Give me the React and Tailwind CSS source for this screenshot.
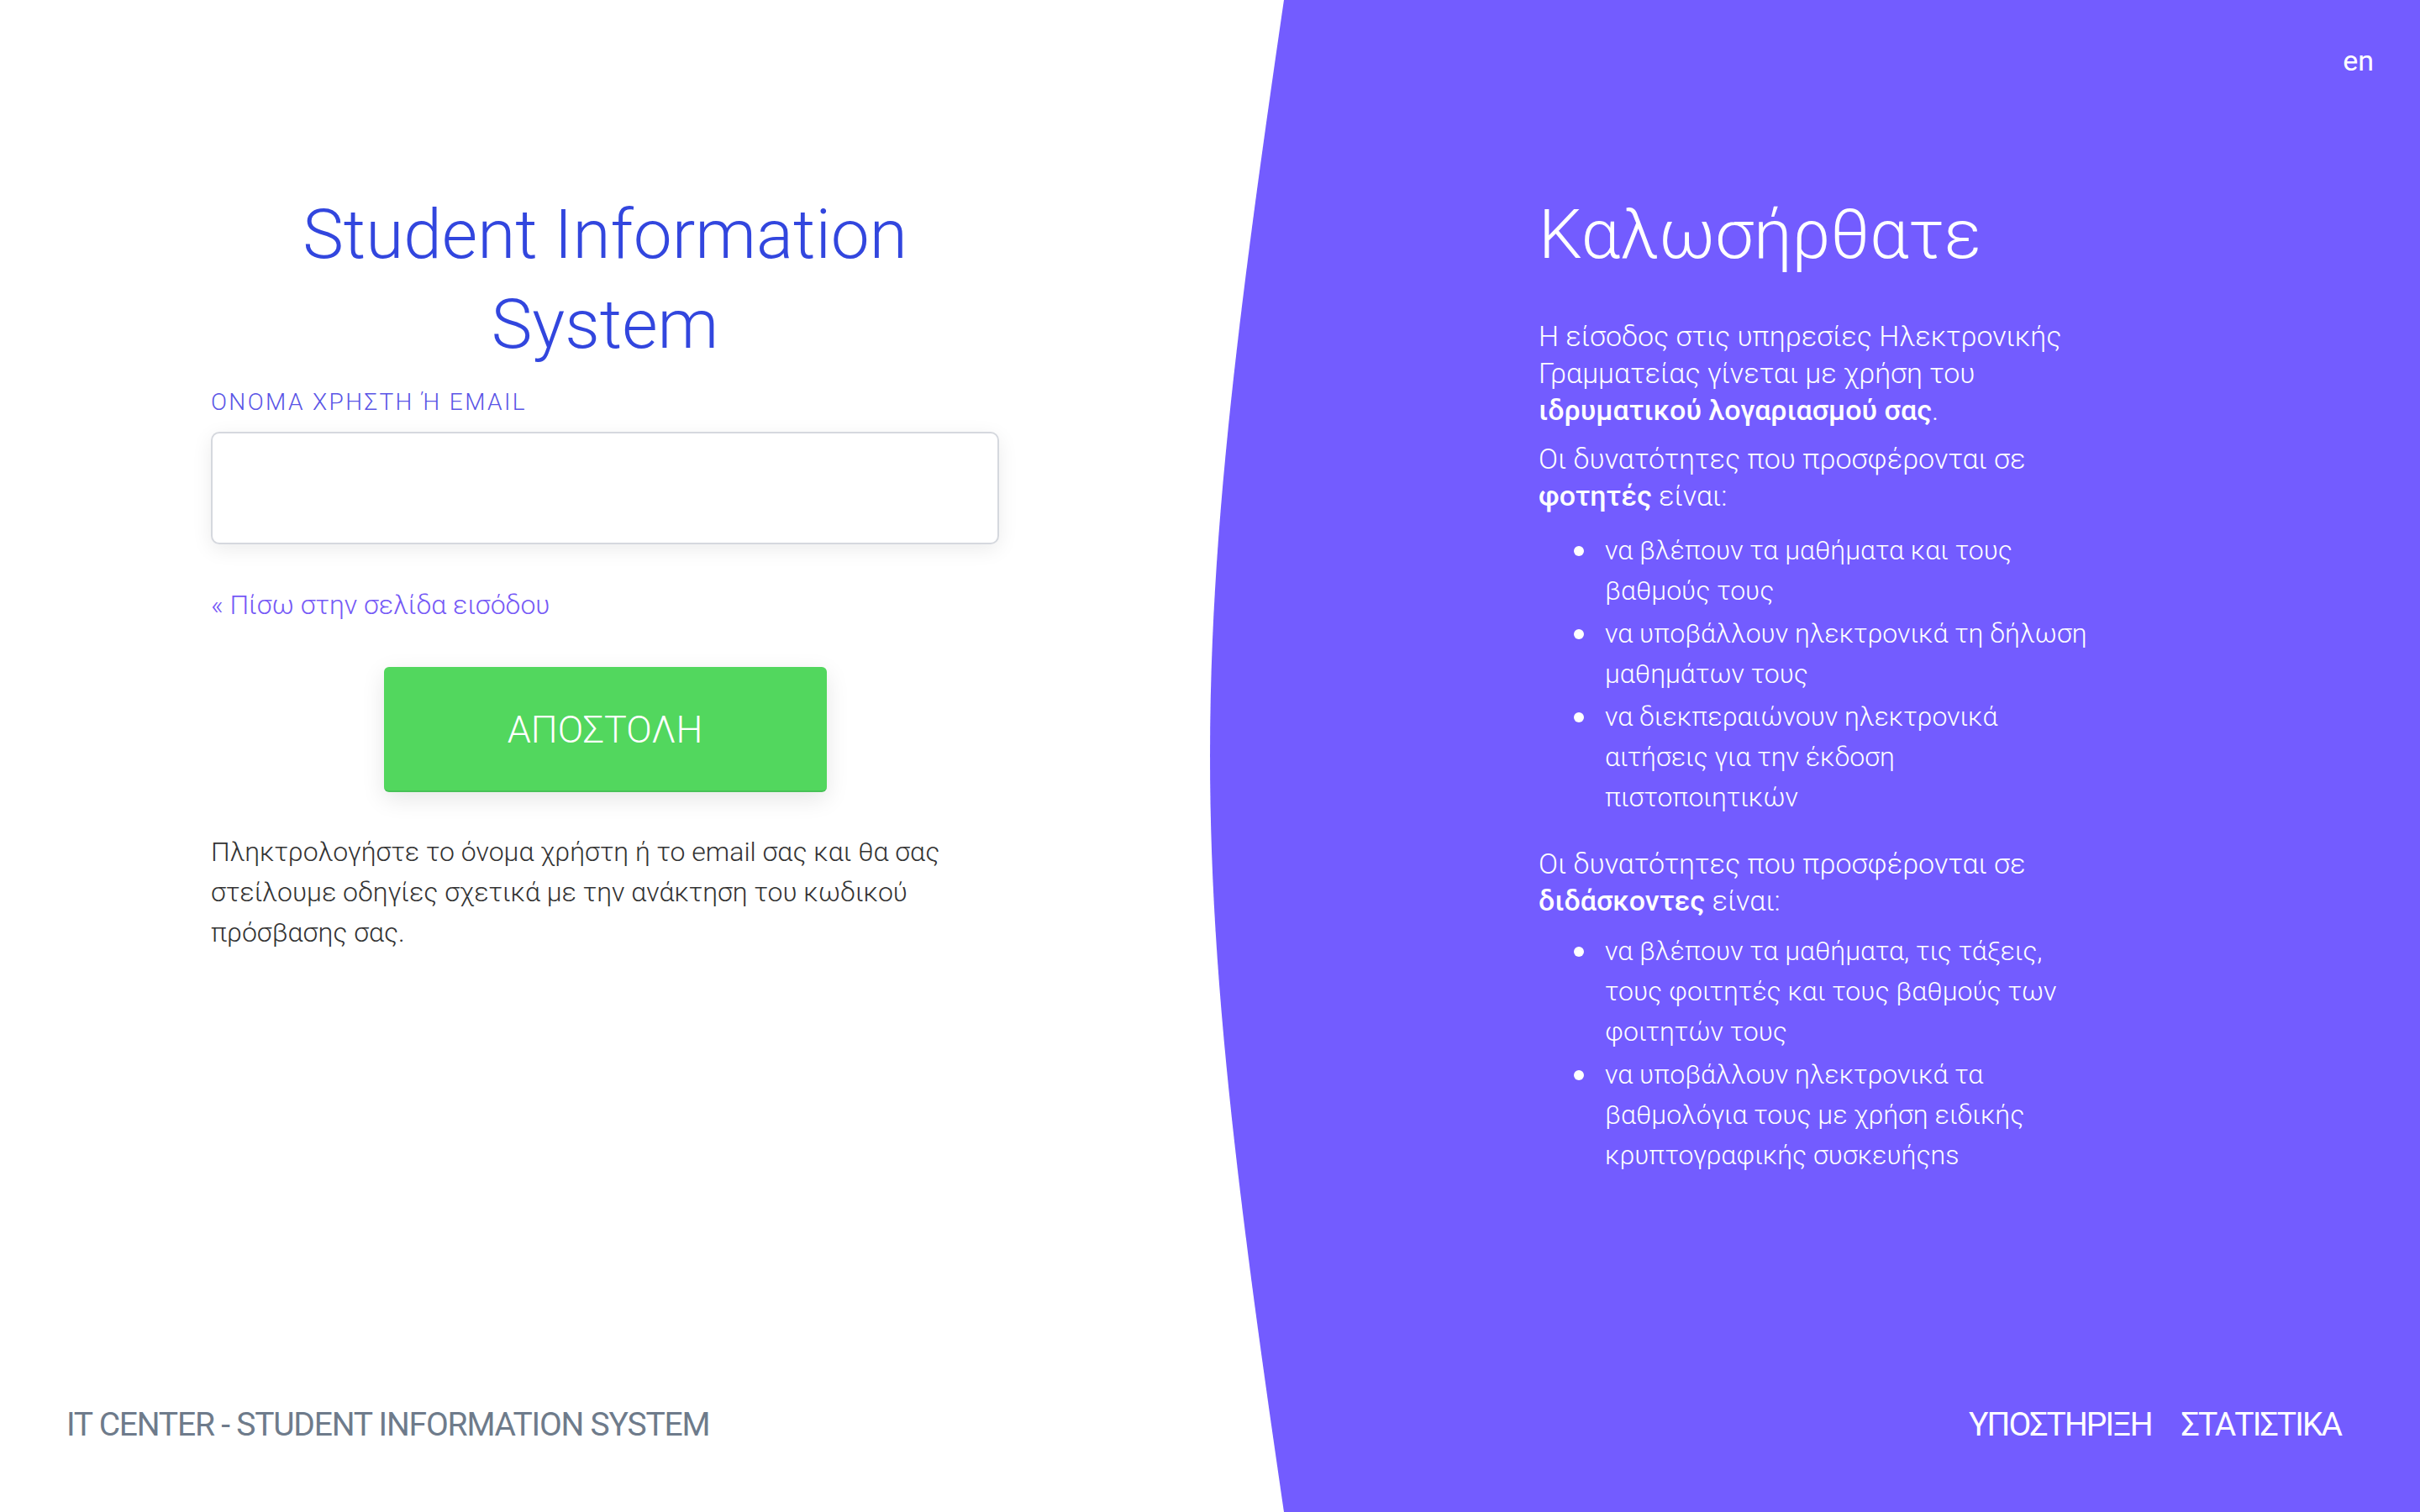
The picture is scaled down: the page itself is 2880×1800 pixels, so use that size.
import React, { useState } from "react";

const studentFeatures = [
  "να βλέπουν τα μαθήματα και τους βαθμούς τους",
  "να υποβάλλουν ηλεκτρονικά τη δήλωση μαθημάτων τους",
  "να διεκπεραιώνουν ηλεκτρονικά αιτήσεις για την έκδοση πιστοποιητικών",
];

const teacherFeatures = [
  "να βλέπουν τα μαθήματα, τις τάξεις, τους φοιτητές και τους βαθμούς των φοιτητών τους",
  "να υποβάλλουν ηλεκτρονικά τα βαθμολόγια τους με χρήση ειδικής κρυπτογραφικής συσκευήςns",
];

function FeatureList({ items, className }) {
  return (
    <ul className={`pl-[42px] text-[32px] leading-[48px] font-light ${className}`}>
      {items.map((item) => (
        <li key={item} className="mb-[3px] flex">
          <span className="mt-[19px] h-[12px] w-[12px] shrink-0 rounded-full bg-white" />
          <span className="ml-[25px]">{item}</span>
        </li>
      ))}
    </ul>
  );
}

export default function App() {
  const [username, setUsername] = useState("");

  return (
    <div className="flex h-screen w-full overflow-hidden bg-white font-['Roboto','Noto_Sans',sans-serif]">
      {/* Left: form */}
      <div className="flex w-1/2 flex-col">
        <main className="flex-1 pt-[226px]">
          <div className="mx-auto w-[938px]">
            <h1 className="text-center text-[82px] leading-[107px] font-light text-[#3246de]">
              Student Information System
            </h1>

            <label className="mt-[22px] block text-[28px] leading-[34px] font-light tracking-[2.4px] text-[#5a55e6]">
              ΟΝΟΜΑ ΧΡΗΣΤΗ Ή EMAIL
            </label>
            <input
              type="text"
              value={username}
              onChange={(e) => setUsername(e.target.value)}
              className="mt-[18px] block h-[134px] w-full rounded-[10px] border-2 border-[#d5d8de] bg-white px-6 text-[32px] shadow-[0_6px_24px_rgba(0,0,0,0.08)] outline-none"
            />

            <a
              href="#"
              className="mt-[48px] block text-[32px] leading-[48px] font-light text-[#7559f6]"
            >
              « Πίσω στην σελίδα εισόδου
            </a>

            <div className="mt-[50px] flex justify-center">
              <button className="h-[149px] w-[527px] rounded-[6px] border-b-2 border-[#47c257] bg-[#52d75e] pt-[2px] text-[45px] font-light text-white shadow-[0_8px_28px_rgba(0,0,0,0.1)]">
                ΑΠΟΣΤΟΛΗ
              </button>
            </div>

            <p className="mt-[47px] text-[32px] leading-[48px] font-light text-[#333333]">
              Πληκτρολογήστε το όνομα χρήστη ή το email σας και θα σας
              στείλουμε οδηγίες σχετικά με την ανάκτηση του κωδικού
              πρόσβασης σας.
            </p>
          </div>
        </main>

        <footer className="px-[79px] pb-[80px] text-[39px] leading-[48px] tracking-[-1.2px] text-[#6e7b8b]">
          IT CENTER - STUDENT INFORMATION SYSTEM
        </footer>
      </div>

      {/* Right: welcome panel */}
      <div className="relative flex w-1/2 flex-col text-white">
        <svg
          className="absolute inset-0 h-full w-full"
          viewBox="0 0 1440 1800"
          preserveAspectRatio="none"
          aria-hidden="true"
        >
          <path d="M88 0 C-29.3 800 -29.3 1000 88 1800 L1440 1800 L1440 0 Z" fill="#735cff" />
        </svg>

        <header className="relative flex justify-end pt-[52px] pr-[55px]">
          <a href="#" className="text-[34px] leading-[40px]">
            en
          </a>
        </header>

        <main className="relative flex-1 pt-[134px]">
          <div className="ml-[391px] w-[657px]">
            <h2 className="text-[82px] leading-[107px] font-light">Καλωσήρθατε</h2>

            <p className="mt-[45px] text-[34px] leading-[44px] font-light">
              Η είσοδος στις υπηρεσίες Ηλεκτρονικής Γραμματείας γίνεται με χρήση του{" "}
              <span className="font-medium">ιδρυματικού λογαριασμού σας</span>.
            </p>

            <p className="mt-[14px] text-[34px] leading-[44px] font-light">
              Οι δυνατότητες που προσφέρονται σε <span className="font-medium">φοτητές</span> είναι:
            </p>
            <FeatureList items={studentFeatures} className="mt-[19px]" />

            <p className="mt-[33px] text-[34px] leading-[44px] font-light">
              Οι δυνατότητες που προσφέρονται σε{" "}
              <span className="font-medium">διδάσκοντες</span> είναι:
            </p>
            <FeatureList items={teacherFeatures} className="mt-[14px]" />
          </div>
        </main>

        <footer className="relative flex justify-end gap-[35px] pr-[94px] pb-[80px] text-[39px] leading-[48px] tracking-[-1.9px]">
          <a href="#">ΥΠΟΣΤΗΡΙΞΗ</a>
          <a href="#">ΣΤΑΤΙΣΤΙΚΑ</a>
        </footer>
      </div>
    </div>
  );
}
